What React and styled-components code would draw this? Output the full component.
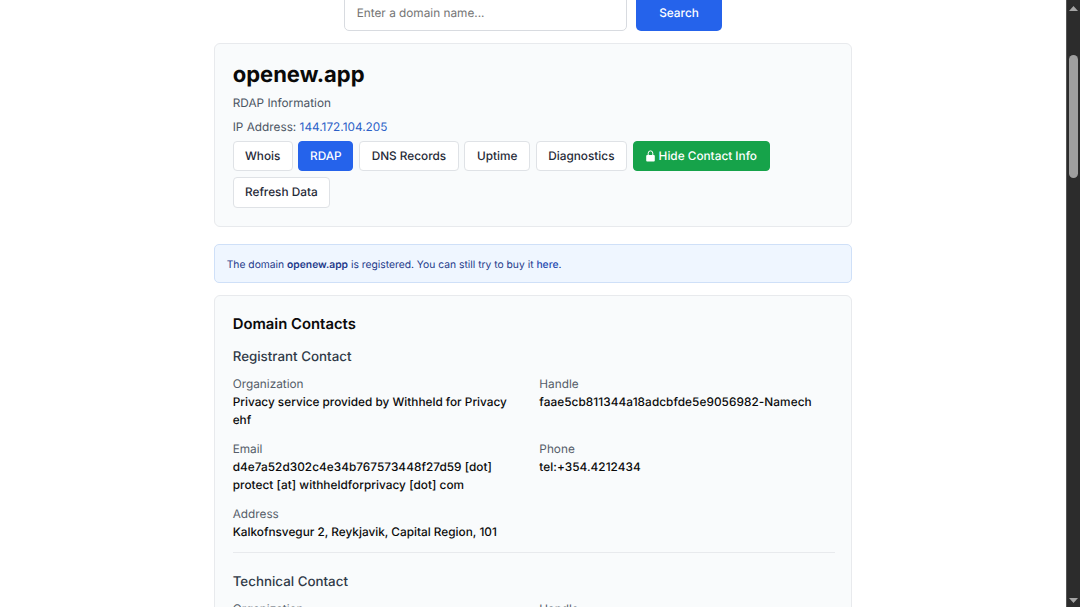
import React from "react";
import styled, { createGlobalStyle, css } from "styled-components";

const GlobalStyle = createGlobalStyle`
  * {
    box-sizing: border-box;
  }
  body {
    margin: 0;
    background: #fff;
    color: #0a0a0a;
    font-family: Inter, "Liberation Sans", sans-serif;
    text-rendering: geometricPrecision;
    overflow: hidden;
  }
  input, button {
    text-rendering: inherit;
  }
  h1, h2, h3, p, dl, dt, dd {
    margin: 0;
  }
`;

const Window = styled.div`
  display: flex;
  width: 100%;
  height: 100vh;
  overflow: hidden;
`;

const Page = styled.main`
  flex: 1;
  display: flex;
  flex-direction: column;
  align-items: center;
  overflow: hidden;
`;

const SearchForm = styled.form`
  flex: none;
  display: flex;
  gap: 9px;
  width: 378px;
  height: 36px;
  margin-top: -5px;
  margin-bottom: 12px;

  input {
    flex: 1;
    min-width: 0;
    padding: 0 12px 0 11.7px;
    border: 1px solid #d8dbe0;
    border-radius: 5px;
    outline: none;
    font: 400 11.8px Inter, sans-serif;
    &::placeholder {
      color: #757575;
    }
  }
  button {
    width: 86px;
    padding: 0;
    border: none;
    border-radius: 5px;
    background: #2563eb;
    color: #fff;
    font: 500 11.8px Inter, sans-serif;
  }
`;

const Card = styled.section`
  flex: none;
  width: 638px;
  padding: ${(props) => props.$top || 17}px 16px 18px 17.7px;
  border: 1px solid #e8eaed;
  border-radius: 6px;
  background: #f9fbfc;
`;

const DomainName = styled.h1`
  font-size: 22px;
  line-height: 28px;
  font-weight: 700;
`;

const Meta = styled.p`
  margin-top: ${(props) => props.$gap}px;
  font-size: 11.8px;
  line-height: 18px;
  color: #4b5563;

  a {
    color: #2b5fc7;
    text-decoration: none;
  }
`;

const Actions = styled.div`
  display: flex;
  flex-wrap: wrap;
  gap: 6px 5.7px;
  margin-top: 5px;
`;

const variants = {
  plain: css`
    border: 1px solid #dfe2e6;
    background: #fff;
    color: #1f2937;
  `,
  active: css`
    border: 1px solid #2563eb;
    background: #2563eb;
    color: #fff;
  `,
  green: css`
    border: 1px solid #16a34a;
    background: #16a34a;
    color: #fff;
  `,
};

const ActionButton = styled.button`
  display: flex;
  align-items: center;
  justify-content: center;
  gap: 4px;
  width: ${(props) => props.$width}px;
  height: 30.5px;
  padding: 0;
  border-radius: 4px;
  font: 500 11.8px Inter, sans-serif;
  white-space: nowrap;
  ${(props) => variants[props.$variant || "plain"]}
`;

const Notice = styled.div`
  flex: none;
  width: 638px;
  height: 39px;
  margin: 17px 0 12px;
  padding: 1px 11.7px 0;
  border: 1px solid #cfe0f8;
  border-radius: 5px;
  background: #eff6ff;
  color: #1e3a8a;
  font-size: 10.3px;
  line-height: 38px;

  strong {
    font-weight: 600;
  }
  a {
    color: #1e48b0;
    font-weight: 500;
    text-decoration: none;
  }
`;

const CardTitle = styled.h2`
  font-size: 14.85px;
  line-height: 20px;
  font-weight: 600;
`;

const Contact = styled.section`
  margin-top: ${(props) => (props.$divided ? "11.2px" : "13.3px")};
  padding-top: ${(props) => (props.$divided ? "18.5px" : "0")};
  border-top: ${(props) => (props.$divided ? "1px solid #e8eaed" : "none")};

  h3 {
    font-size: 13.35px;
    line-height: 20px;
    font-weight: 500;
    color: #2f3947;
  }
`;

const Fields = styled.dl`
  display: grid;
  grid-template-columns: repeat(2, minmax(0, 1fr));
  column-gap: 11px;
  row-gap: 11px;
  margin-top: 8.2px;
`;

const Field = styled.div`
  font-size: 11.8px;
  line-height: 18px;

  dt {
    color: #555d69;
  }
  dd {
    max-width: 280px;
    font-weight: 500;
    letter-spacing: ${(props) => props.$tracking || 0}px;
    color: #0a0a0a;
  }
`;

const Scrollbar = styled.div`
  flex: none;
  display: flex;
  flex-direction: column;
  align-items: center;
  width: 14px;
  padding: 6px 0 4px;
  border-left: 1px solid #555;
  background: #2c2c2c;

  .thumb {
    width: 9px;
    height: 123px;
    margin: 44px 0 auto;
    border-radius: 5px;
    background: #9f9f9f;
  }
  svg {
    display: block;
  }
`;

const registrant = [
  {
    label: "Organization",
    value: "Privacy service provided by Withheld for Privacy ehf",
  },
  {
    label: "Handle",
    value: "faae5cb811344a18adcbfde5e9056982-Namech",
    tracking: 0.07,
  },
  {
    label: "Email",
    value:
      "d4e7a52d302c4e34b767573448f27d59 [dot] protect [at] withheldforprivacy [dot] com",
    tracking: 0.04,
  },
  { label: "Phone", value: "tel:+354.4212434", tracking: 0.05 },
  {
    label: "Address",
    value: "Kalkofnsvegur 2, Reykjavik, Capital Region, 101",
  },
];

const technical = [
  { label: "Organization", value: "" },
  { label: "Handle", value: "" },
];

const LockIcon = () => (
  <svg width="9" height="12" viewBox="0 0 9 12">
    <path
      d="M2.2 5.5V3.2a2.3 2.3 0 0 1 4.6 0v2.3"
      fill="none"
      stroke="#fff"
      strokeWidth="1"
    />
    <rect x="0.2" y="4.9" width="8.6" height="6.6" rx="1" fill="#fff" />
  </svg>
);

const ContactFields = ({ fields }) => (
  <Fields>
    {fields.map(({ label, value, tracking }) => (
      <Field key={label} $tracking={tracking}>
        <dt>{label}</dt>
        <dd>{value}</dd>
      </Field>
    ))}
  </Fields>
);

const App = () => {
  return (
    <>
      <GlobalStyle />
      <Window>
        <Page>
          <SearchForm>
            <input placeholder="Enter a domain name..." />
            <button type="button">Search</button>
          </SearchForm>
          <Card>
            <DomainName>openew.app</DomainName>
            <Meta $gap={4.5}>RDAP Information</Meta>
            <Meta $gap={6}>
              IP Address: <a href="#ip">144.172.104.205</a>
            </Meta>
            <Actions>
              <ActionButton $width={60}>Whois</ActionButton>
              <ActionButton $width={55} $variant="active">
                RDAP
              </ActionButton>
              <ActionButton $width={99.7}>DNS Records</ActionButton>
              <ActionButton $width={65.7}>Uptime</ActionButton>
              <ActionButton $width={91.2}>Diagnostics</ActionButton>
              <ActionButton $width={137.2} $variant="green">
                <LockIcon />
                Hide Contact Info
              </ActionButton>
              <ActionButton $width={97.3}>Refresh Data</ActionButton>
            </Actions>
          </Card>
          <Notice>
            The domain <strong>openew.app</strong> is registered. You can still
            try to buy it <a href="#buy">here</a>.
          </Notice>
          <Card $top={18}>
            <CardTitle>Domain Contacts</CardTitle>
            <Contact>
              <h3>Registrant Contact</h3>
              <ContactFields fields={registrant} />
            </Contact>
            <Contact $divided>
              <h3>Technical Contact</h3>
              <ContactFields fields={technical} />
            </Contact>
          </Card>
        </Page>
        <Scrollbar>
          <svg width="9" height="5" viewBox="0 0 9 5">
            <path d="M4.5 0 9 5H0Z" fill="#a5a5a5" />
          </svg>
          <div className="thumb" />
          <svg width="9" height="5" viewBox="0 0 9 5">
            <path d="M0 0h9L4.5 5Z" fill="#a5a5a5" />
          </svg>
        </Scrollbar>
      </Window>
    </>
  );
};

export default App;
